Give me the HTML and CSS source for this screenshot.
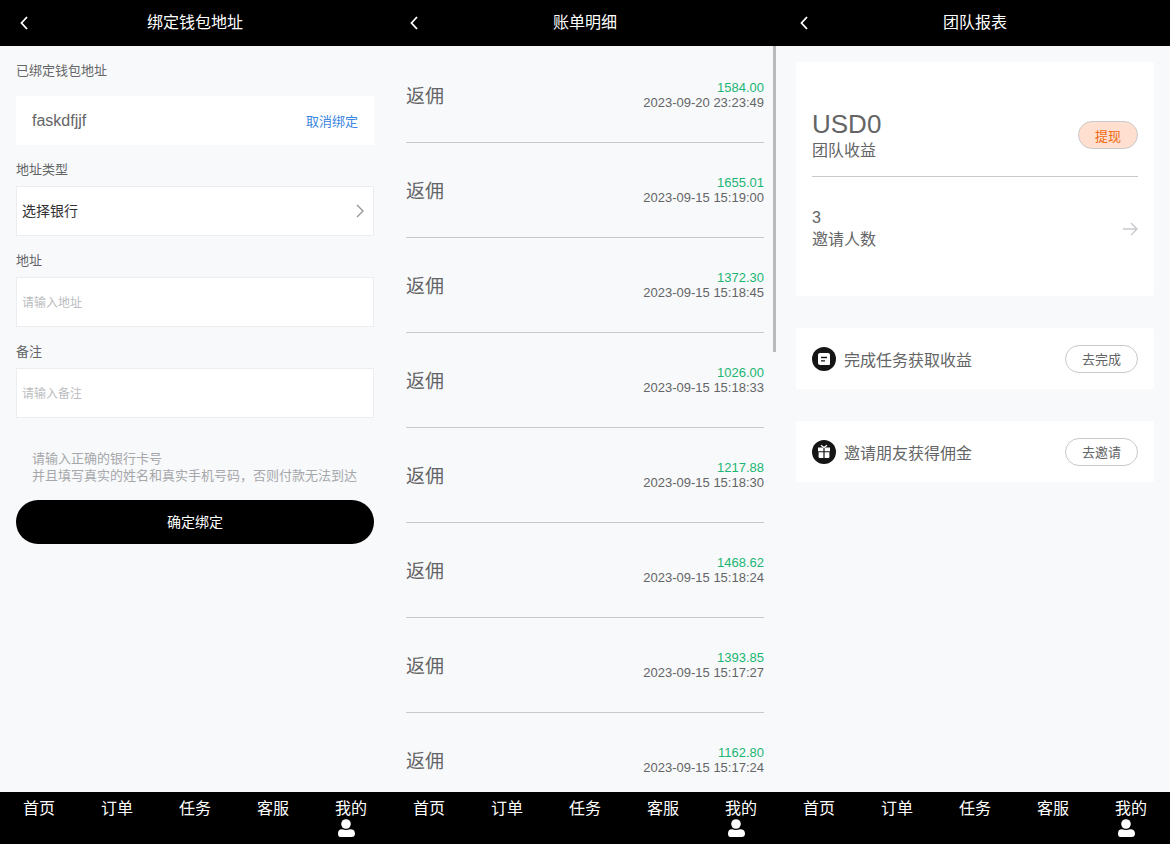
FILE: index.html
```html
<!DOCTYPE html>
<html lang="zh-CN">
<head>
    <meta charset="UTF-8">
    <meta name="viewport" content="width=device-width, initial-scale=1.0">
    <title>我的</title>
    <link rel="stylesheet" href="styles.css">
</head>
<body>
    <svg class="sprite" aria-hidden="true">
        <symbol id="back" viewBox="0 0 16 16">
            <path d="M11 2L5.500 8l5.500 6" fill="none" stroke="currentColor" stroke-width="1.8"/>
        </symbol>
        <symbol id="user" viewBox="0 0 22 20">
            <circle cx="11" cy="5" r="4.8"/>
            <path d="M7 10.200q4 1.500 8 0 5 0 5 4.300 0 3.500-3.500 3.500h-11Q3 18 3 14.500q0-4.300 4-4.300z"/>
        </symbol>
    </svg>

    <div class="screens">
        <!-- 绑定钱包地址 -->
        <section class="screen">
            <header class="navbar">
                <button class="back" type="button" aria-label="返回"><svg><use href="#back"/></svg></button>
                <h1>绑定钱包地址</h1>
            </header>
            <main class="content wallet">
                <h2 class="label">已绑定钱包地址</h2>
                <div class="bound">
                    <span>faskdfjjf</span>
                    <button class="unbind" type="button">取消绑定</button>
                </div>
                <form>
                    <label class="label" for="type">地址类型</label>
                    <div class="select">
                        <select class="field" id="type">
                            <option>选择银行</option>
                        </select>
                        <svg viewBox="0 0 10 14"><path d="M2 1l6 6-6 6" fill="none" stroke="#969799" stroke-width="1.4"/></svg>
                    </div>
                    <label class="label" for="address">地址</label>
                    <input class="field" id="address" type="text" placeholder="请输入地址">
                    <label class="label" for="remark">备注</label>
                    <input class="field" id="remark" type="text" placeholder="请输入备注">
                    <p class="hint">请输入正确的银行卡号<br>并且填写真实的姓名和真实手机号码，否则付款无法到达</p>
                    <button class="submit" type="button">确定绑定</button>
                </form>
            </main>
            <nav class="tabbar">
                <a href="#">首页</a>
                <a href="#">订单</a>
                <a href="#">任务</a>
                <a href="#">客服</a>
                <a href="#">我的<svg><use href="#user"/></svg></a>
            </nav>
        </section>

        <!-- 账单明细 -->
        <section class="screen">
            <header class="navbar">
                <button class="back" type="button" aria-label="返回"><svg><use href="#back"/></svg></button>
                <h1>账单明细</h1>
            </header>
            <main class="content bills">
                <ul>
                    <li><span class="name">返佣</span><div class="detail"><b>1584.00</b><time>2023-09-20 23:23:49</time></div></li>
                    <li><span class="name">返佣</span><div class="detail"><b>1655.01</b><time>2023-09-15 15:19:00</time></div></li>
                    <li><span class="name">返佣</span><div class="detail"><b>1372.30</b><time>2023-09-15 15:18:45</time></div></li>
                    <li><span class="name">返佣</span><div class="detail"><b>1026.00</b><time>2023-09-15 15:18:33</time></div></li>
                    <li><span class="name">返佣</span><div class="detail"><b>1217.88</b><time>2023-09-15 15:18:30</time></div></li>
                    <li><span class="name">返佣</span><div class="detail"><b>1468.62</b><time>2023-09-15 15:18:24</time></div></li>
                    <li><span class="name">返佣</span><div class="detail"><b>1393.85</b><time>2023-09-15 15:17:27</time></div></li>
                    <li><span class="name">返佣</span><div class="detail"><b>1162.80</b><time>2023-09-15 15:17:24</time></div></li>
                </ul>
                <div class="thumb"></div>
            </main>
            <nav class="tabbar">
                <a href="#">首页</a>
                <a href="#">订单</a>
                <a href="#">任务</a>
                <a href="#">客服</a>
                <a href="#">我的<svg><use href="#user"/></svg></a>
            </nav>
        </section>

        <!-- 团队报表 -->
        <section class="screen">
            <header class="navbar">
                <button class="back" type="button" aria-label="返回"><svg><use href="#back"/></svg></button>
                <h1>团队报表</h1>
            </header>
            <main class="content team">
                <div class="card summary">
                    <div class="row income">
                        <div>
                            <p class="money">USD0</p>
                            <p>团队收益</p>
                        </div>
                        <button class="pill withdraw" type="button">提现</button>
                    </div>
                    <a class="row invited" href="#">
                        <div>
                            <p>3</p>
                            <p>邀请人数</p>
                        </div>
                        <svg viewBox="0 0 16 16"><path d="M1 8h14M9 2l6 6-6 6" fill="none" stroke="#c8c9cc" stroke-width="1.4"/></svg>
                    </a>
                </div>
                <div class="card row task">
                    <svg viewBox="0 0 24 24">
                        <circle cx="12" cy="12" r="12" fill="#151515"/>
                        <path d="M8 6h8a2 2 0 0 1 2 2v9a1 1 0 0 1-1 1H8a2 2 0 0 1-2-2V8a2 2 0 0 1 2-2z" fill="#fff"/>
                        <path d="M9 10.5h6M9 13.8h4" stroke="#151515" stroke-width="1.3"/>
                    </svg>
                    <span>完成任务获取收益</span>
                    <button class="pill" type="button">去完成</button>
                </div>
                <div class="card row task">
                    <svg viewBox="0 0 24 24">
                        <circle cx="12" cy="12" r="12" fill="#151515"/>
                        <path d="M6 7.5h5.4v3.8H6zM12.6 7.5H18v3.8h-5.4zM6.6 12.2h4.8V18H7.600a1 1 0 0 1-1-1zM12.6 12.2h4.800V17a1 1 0 0 1-1 1h-3.8z" fill="#fff"/>
                        <path d="M9 5.2l3 2.3 3-2.3" fill="none" stroke="#fff" stroke-width="1.2"/>
                    </svg>
                    <span>邀请朋友获得佣金</span>
                    <button class="pill" type="button">去邀请</button>
                </div>
            </main>
            <nav class="tabbar">
                <a href="#">首页</a>
                <a href="#">订单</a>
                <a href="#">任务</a>
                <a href="#">客服</a>
                <a href="#">我的<svg><use href="#user"/></svg></a>
            </nav>
        </section>
    </div>
</body>
</html>
```
FILE: styles.css
```css
* {
    box-sizing: border-box;
    margin: 0;
    padding: 0;
}

body {
    font-family: "Liberation Sans", "Noto Sans CJK SC", sans-serif;
    font-size: 16px;
    color: #646566;
    background: #f8f9fb;
}

button,
input,
select {
    font-family: inherit;
    border: none;
    background: none;
}

button {
    cursor: pointer;
}

a {
    color: inherit;
    text-decoration: none;
}

.sprite {
    display: none;
}

.screens {
    display: grid;
    grid-template-columns: repeat(3, 1fr);
    height: 100vh;
}

.screen {
    display: flex;
    flex-direction: column;
    min-width: 0;
    min-height: 0;
}

/* 顶部导航 */
.navbar {
    display: grid;
    grid-template-columns: 32px 1fr 32px;
    align-items: center;
    height: 46px;
    padding: 0 8px;
    background: #000;
    color: #fff;
}

.navbar h1 {
    font-size: 16px;
    font-weight: 400;
    line-height: 24px;
    text-align: center;
}

.back {
    display: flex;
    justify-content: center;
    color: #fff;
}

.back svg {
    width: 16px;
    height: 16px;
}

.content {
    flex: 1;
    min-height: 0;
    padding: 16px;
    overflow: hidden;
}

/* 底部标签栏 */
.tabbar {
    display: grid;
    grid-template-columns: repeat(5, 1fr);
    justify-items: center;
    height: 52px;
    padding-top: 7px;
    background: #000;
    color: #fff;
}

.tabbar a {
    display: flex;
    flex-direction: column;
    line-height: 20px;
}

.tabbar svg {
    width: 22px;
    height: 20px;
    fill: #fff;
}

/* 绑定钱包 */
.label {
    display: block;
    padding: 16px 0 7px;
    font-size: 13px;
    font-weight: 400;
    line-height: 18px;
}

h2.label {
    padding: 0 0 16px;
}

.bound {
    display: flex;
    justify-content: space-between;
    align-items: center;
    height: 49px;
    padding: 0 16px;
    background: #fff;
}

.unbind {
    font-size: 13px;
    color: #3a86e0;
}

.field {
    display: block;
    width: 100%;
    height: 50px;
    padding: 0 5px;
    border: 1px solid #ebedf0;
    background: #fff;
    font-size: 14px;
    color: #323233;
}

select.field {
    appearance: none;
}

.field::placeholder {
    font-size: 12px;
    color: #bbbdc0;
}

.select {
    display: grid;
    align-items: center;
}

.select > * {
    grid-area: 1 / 1;
}

.select svg {
    width: 10px;
    height: 14px;
    margin-right: 9px;
    justify-self: end;
    pointer-events: none;
}

.hint {
    padding: 32px 0 16px 16px;
    font-size: 13px;
    line-height: 17px;
    color: #a6a7aa;
}

.submit {
    width: 100%;
    height: 44px;
    padding-bottom: 3px;
    border-radius: 22px;
    background: #000;
    color: #fff;
    font-size: 14px;
}

/* 账单 */
.bills {
    position: relative;
    padding: 2px 16px 0;
}

.bills li {
    display: flex;
    justify-content: space-between;
    align-items: flex-start;
    padding: 32px 0 28px;
    border-bottom: 1px solid #c8c9cc;
}

.bills .name {
    font-size: 19px;
    line-height: 34px;
}

.detail {
    display: flex;
    flex-direction: column;
    font-size: 13px;
    line-height: 15px;
    text-align: right;
}

.detail b {
    font-weight: 400;
    color: #1bb673;
}

.thumb {
    position: absolute;
    top: 0;
    right: 4px;
    width: 3px;
    height: 41%;
    background: #b9babd;
}

/* 团队报表 */
.team {
    display: flex;
    flex-direction: column;
    gap: 32px;
}

.card {
    padding: 16px;
    background: #fff;
    border-radius: 2px;
}

.row {
    display: flex;
    justify-content: space-between;
    align-items: center;
}

.row p {
    line-height: 22px;
}

.row .money {
    font-size: 26px;
    line-height: 32px;
}

.income {
    padding: 30px 0 14px;
    border-bottom: 1px solid #c8c9cc;
}

.invited {
    padding: 30px 0 29px;
}

.invited svg {
    width: 16px;
    height: 16px;
}

.pill {
    height: 28px;
    padding: 0 16px;
    border: 1px solid #c8c9cc;
    border-radius: 14px;
    font-size: 13px;
    color: #646566;
}

.withdraw {
    background: #ffdfd0;
    color: #f06a10;
}

.task {
    gap: 8px;
    min-height: 61px;
}

.task svg {
    width: 24px;
    height: 24px;
}

.task span {
    flex: 1;
}
```
